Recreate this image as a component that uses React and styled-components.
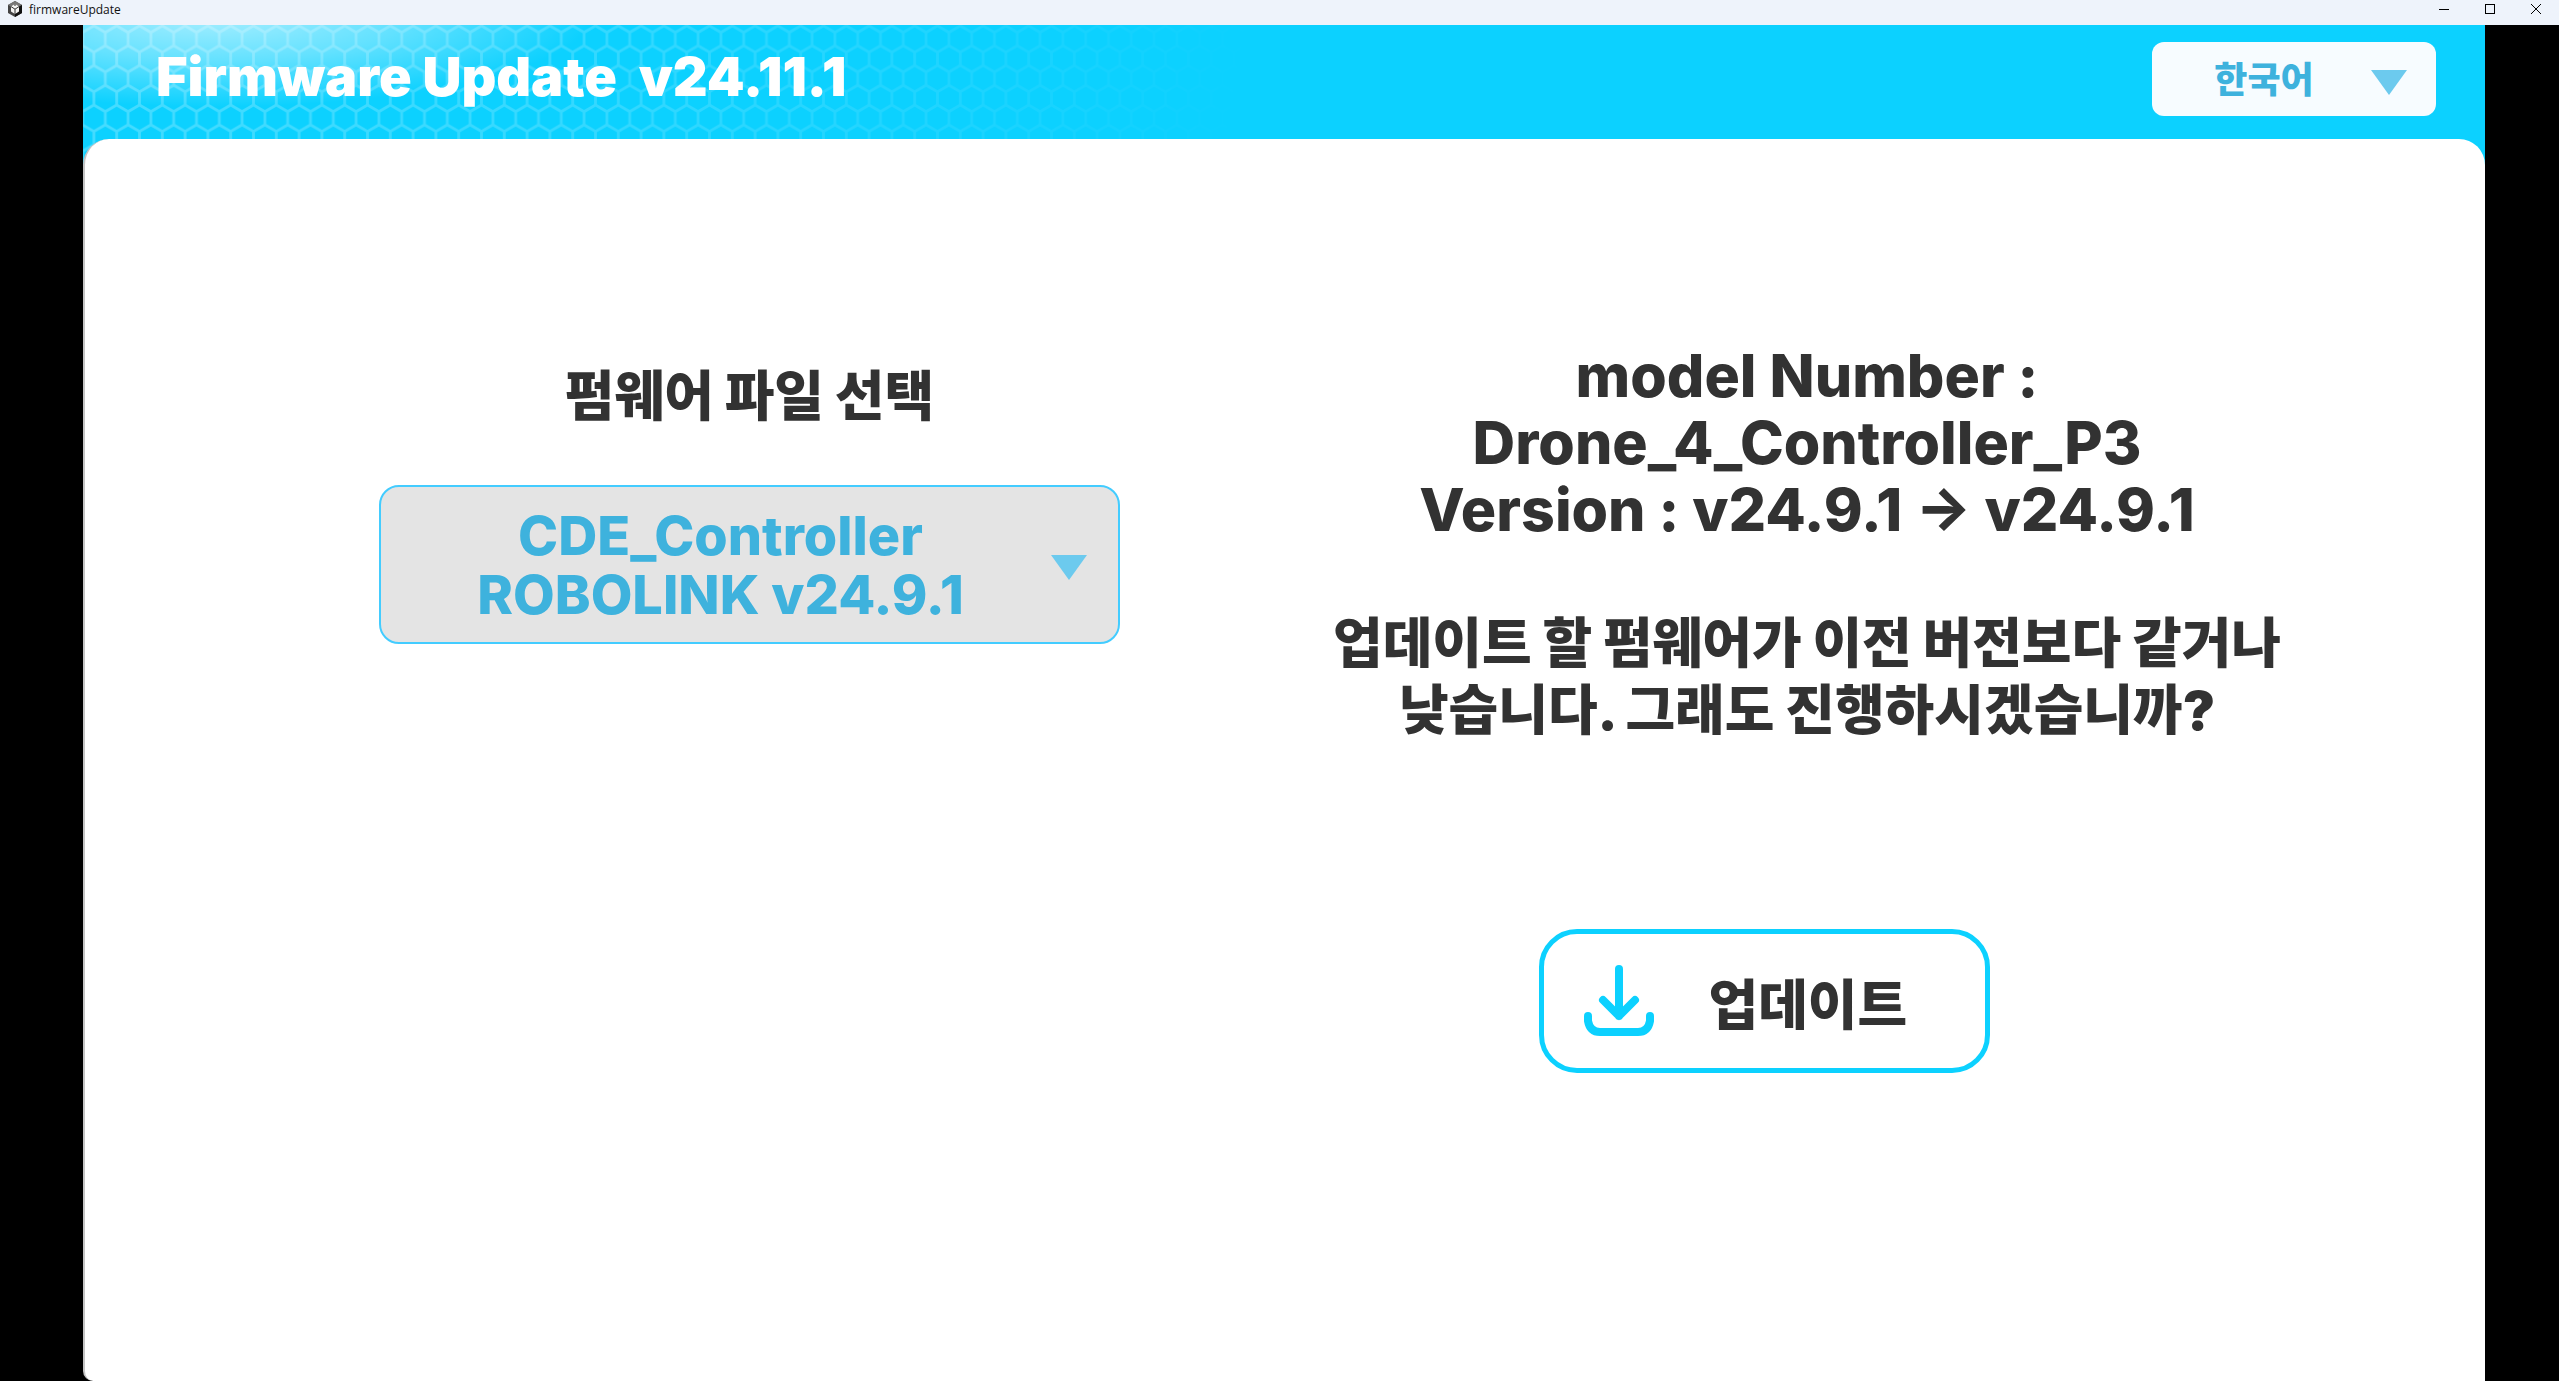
import React, { useState } from "react";
import styled, { createGlobalStyle } from "styled-components";

const GlobalStyle = createGlobalStyle`
  *, *::before, *::after { box-sizing: border-box; }
  body { margin: 0; background: #000; }
  button, select { font: inherit; color: inherit; }
`;

const Window = styled.div`
  display: flex;
  flex-direction: column;
  min-height: 100vh;
  font-family: Inter, "Noto Sans CJK KR", sans-serif;
  font-weight: 800;
  color: #323232;
  background: #000;
`;

const TitleBar = styled.div`
  display: flex;
  align-items: center;
  height: 25px;
  padding: 0 17px 7px 8px;
  gap: 7px;
  background: #eef3fb;
  color: #111;
  font: 400 12px/18px "Open Sans", "Noto Sans", sans-serif;
`;

const WindowName = styled.span`
  flex: 1;
  padding-top: 2px;
`;

const WindowButtons = styled.div`
  display: flex;
  gap: 34px;
`;

const WindowButton = styled.button`
  display: flex;
  width: 12px;
  height: 12px;
  padding: 0;
  border: 0;
  background: none;
`;

const Stage = styled.div`
  flex: 1;
  display: flex;
  flex-direction: column;
  position: relative;
  margin: 0 74px 0 83px;
  background: linear-gradient(#0cd1ff 200px, #000 200px);
  overflow: hidden;
`;

const Backdrop = styled.svg`
  position: absolute;
  top: 0;
  left: 0;
  width: 1200px;
  height: 150px;
`;

const Header = styled.header`
  position: relative;
  display: flex;
  align-items: center;
  justify-content: space-between;
  height: 114px;
  padding: 0 49px 10px 73px;
`;

const Title = styled.h1`
  margin: 0;
  color: #fff;
  font-size: 54px;
  line-height: 60px;
  font-weight: 900;
  white-space: pre;
`;

const LanguageBox = styled.div`
  display: flex;
  align-items: center;
  position: relative;
  width: 284px;
  height: 74px;
  margin-top: 4px;
  border-radius: 12px;
  background: #f7fcff;
  color: #3eb2dd;
`;

const LanguageSelect = styled.select`
  appearance: none;
  width: 100%;
  height: 100%;
  padding: 2px 60px 0 0;
  border: 0;
  border-radius: 12px;
  background: transparent;
  font-size: 36px;
  font-weight: 900;
  text-align: center;
  text-align-last: center;
`;

const Triangle = styled.svg`
  position: absolute;
  top: ${(p) => p.$top}px;
  right: ${(p) => p.$right}px;
  width: 36px;
  height: 25px;
  fill: #6ccaee;
  pointer-events: none;
`;

const Panel = styled.main`
  flex: 1;
  position: relative;
  display: grid;
  grid-template-columns: 741fr 960fr;
  column-gap: 207px;
  align-items: start;
  padding: 200px 198px 120px 294px;
  border-left: 2px solid #c4c4c4;
  border-radius: 26px 26px 0 10px;
  background: #fff;
`;

const FileSection = styled.section`
  display: flex;
  flex-direction: column;
  gap: 48px;
  padding-top: 18px;
`;

const SectionLabel = styled.label`
  font-size: 54px;
  line-height: 80px;
  font-weight: 900;
  text-align: center;
`;

const FileBox = styled.div`
  position: relative;
  display: flex;
  align-items: center;
  height: 159px;
  padding: 0 84px 0 26px;
  border: 2px solid #43ccff;
  border-radius: 20px;
  background: #e4e4e4;
  color: #3eb2dd;
`;

const FileName = styled.span`
  flex: 1;
  font-size: 54px;
  line-height: 59px;
  text-align: center;
  white-space: pre;
`;

const FileSelect = styled.select`
  position: absolute;
  inset: 0;
  width: 100%;
  height: 100%;
  opacity: 0;
`;

const InfoSection = styled.section`
  display: flex;
  flex-direction: column;
  align-items: center;
  padding-top: 3px;
`;

const Message = styled.p`
  margin: 0 0 67px;
  font-size: ${(p) => p.$size}px;
  line-height: 67px;
  font-weight: ${(p) => p.$weight};
  text-align: center;
  white-space: pre;
`;

const UpdateButton = styled.button`
  display: flex;
  align-items: center;
  gap: 55px;
  width: 451px;
  height: 144px;
  margin: 118px 86px 0 0;
  padding: 0 0 0 40px;
  border: 5px solid #0cd1ff;
  border-radius: 38px;
  background: #fff;
  font-size: 54px;
  font-weight: 900;
`;

const FILES = ["CDE_Controller\nROBOLINK v24.9.1"];

function HexBackdrop() {
  return (
    <Backdrop viewBox="0 0 1200 150" aria-hidden="true">
      <defs>
        <pattern id="hex" x="-0.5" y="0.8" width="22.8" height="39.6" patternUnits="userSpaceOnUse">
          <path
            d="M0 6.6L11.4 0L22.8 6.6M0 6.6V19.8L11.4 26.4L22.8 19.8V6.6M11.4 26.4V39.6M0 46.2L11.4 39.6L22.8 46.2"
            fill="none"
            stroke="#fff"
            strokeWidth="2.8"
          />
        </pattern>
        <linearGradient id="fade" x1="0" x2="1150" y1="0" y2="200" gradientUnits="userSpaceOnUse">
          <stop offset="0" stopColor="#fff" stopOpacity="0.24" />
          <stop offset="0.4" stopColor="#fff" stopOpacity="0.18" />
          <stop offset="1" stopColor="#fff" stopOpacity="0" />
        </linearGradient>
        <mask id="hexMask" style={{ maskType: "alpha" }}>
          <rect width="1200" height="150" fill="url(#fade)" />
        </mask>
        <radialGradient id="glow">
          <stop offset="0" stopColor="#fff" stopOpacity="0.64" />
          <stop offset="0.5" stopColor="#fff" stopOpacity="0.36" />
          <stop offset="1" stopColor="#fff" stopOpacity="0" />
        </radialGradient>
      </defs>
      <ellipse cx="130" cy="-10" rx="380" ry="92" fill="url(#glow)" />
      <rect width="1200" height="150" fill="url(#hex)" mask="url(#hexMask)" />
    </Backdrop>
  );
}

function DownTriangle({ top, right }) {
  return (
    <Triangle $top={top} $right={right} viewBox="0 0 36 25" aria-hidden="true">
      <path d="M0 0H36L18 25Z" />
    </Triangle>
  );
}

function AppIcon() {
  return (
    <svg width="14" height="16" viewBox="0 0 14 16" aria-hidden="true">
      <path d="M7 0L14 4V12L7 16L0 12V4Z" fill="#444" />
      <path d="M7 0L14 4L7 8L0 4Z" fill="#777" />
      <path d="M7 16L14 12V4L7 8Z" fill="#111" />
      <path d="M7 3L11 5.5V10.5L7 13L3 10.5V5.5Z" fill="#f4f4f4" />
      <path d="M7 13V8.2L3 5.6M7 8.2L11 5.6M7 3V5" fill="none" stroke="#333" strokeWidth="1" />
    </svg>
  );
}

function DownloadIcon() {
  return (
    <svg width="70" height="72" viewBox="0 0 70 72" fill="none" stroke="#0cd1ff" strokeWidth="8" strokeLinecap="round" strokeLinejoin="round" aria-hidden="true">
      <path d="M35 4V51M19 35L35 51L51 35" />
      <path d="M4 51V56Q6 67 16 67H54Q64 67 66 56V51" />
    </svg>
  );
}

export default function App() {
  const [file, setFile] = useState(FILES[0]);
  return (
    <Window>
      <GlobalStyle />
      <TitleBar>
        <AppIcon />
        <WindowName>firmwareUpdate</WindowName>
        <WindowButtons>
          <WindowButton aria-label="Minimize">
            <svg width="12" height="12" stroke="#000"><path d="M1 6.5H11" /></svg>
          </WindowButton>
          <WindowButton aria-label="Maximize">
            <svg width="12" height="12" stroke="#000" fill="none"><rect x="1.5" y="1.5" width="9" height="9" /></svg>
          </WindowButton>
          <WindowButton aria-label="Close">
            <svg width="12" height="12" stroke="#000"><path d="M1 1L11 11M11 1L1 11" /></svg>
          </WindowButton>
        </WindowButtons>
      </TitleBar>
      <Stage>
        <HexBackdrop />
        <Header>
          <Title>{"Firmware Update  v24.11.1"}</Title>
          <LanguageBox>
            <LanguageSelect aria-label="언어" defaultValue="ko">
              <option value="ko">한국어</option>
            </LanguageSelect>
            <DownTriangle top={28} right={29} />
          </LanguageBox>
        </Header>
        <Panel>
          <FileSection>
            <SectionLabel htmlFor="firmware-file">펌웨어 파일 선택</SectionLabel>
            <FileBox>
              <FileName aria-hidden="true">{file}</FileName>
              <DownTriangle top={68} right={31} />
              <FileSelect id="firmware-file" value={file} onChange={(e) => setFile(e.target.value)}>
                {FILES.map((name) => (
                  <option key={name} value={name}>{name}</option>
                ))}
              </FileSelect>
            </FileBox>
          </FileSection>
          <InfoSection>
            <Message $size={59} $weight={800}>
              {"model Number :\nDrone_4_Controller_P3\nVersion : v24.9.1 → v24.9.1"}
            </Message>
            <Message $size={54} $weight={900}>
              {"업데이트 할 펌웨어가 이전 버전보다 같거나\n낮습니다. 그래도 진행하시겠습니까?"}
            </Message>
            <UpdateButton type="button">
              <DownloadIcon />
              업데이트
            </UpdateButton>
          </InfoSection>
        </Panel>
      </Stage>
    </Window>
  );
}
